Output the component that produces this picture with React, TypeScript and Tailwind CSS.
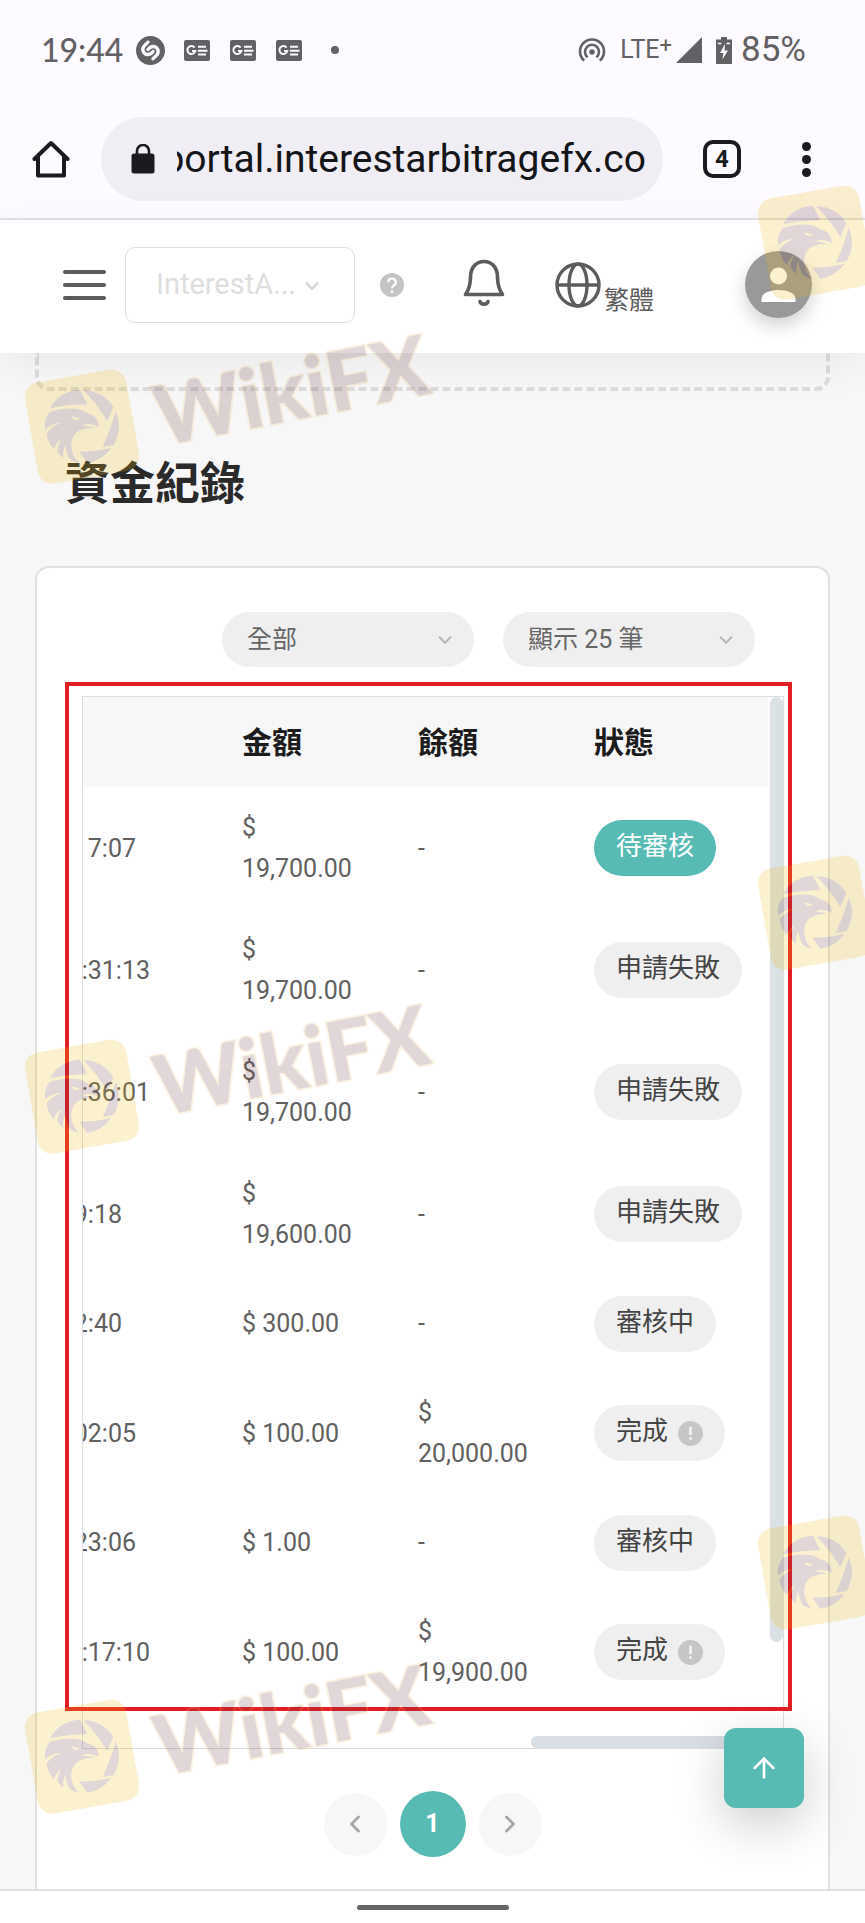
import { ArrowUp, ChevronDown, ChevronLeft, ChevronRight } from "lucide-react";
import { SiShazam } from "react-icons/si";
import clsx from "clsx";

type Row = {
  time: string;
  // right inset of the scrolled date column
  inset: string;
  amount: string;
  balance: string;
  status: string;
  kind?: "pending" | "done";
};

const rows: Row[] = [
  { time: "7:07", inset: "pr-[106px]", amount: "19,700.00", balance: "-", status: "待審核", kind: "pending" },
  { time: ":31:13", inset: "pr-[92px]", amount: "19,700.00", balance: "-", status: "申請失敗" },
  { time: ":36:01", inset: "pr-[92px]", amount: "19,700.00", balance: "-", status: "申請失敗" },
  { time: "9:18", inset: "pr-[120px]", amount: "19,600.00", balance: "-", status: "申請失敗" },
  { time: "2:40", inset: "pr-[120px]", amount: "300.00", balance: "-", status: "審核中" },
  { time: "02:05", inset: "pr-[106px]", amount: "100.00", balance: "$ 20,000.00", status: "完成", kind: "done" },
  { time: "23:06", inset: "pr-[106px]", amount: "1.00", balance: "-", status: "審核中" },
  { time: ":17:10", inset: "pr-[92px]", amount: "100.00", balance: "$ 19,900.00", status: "完成", kind: "done" },
];

function NewsIcon() {
  return (
    <svg viewBox="0 0 26 21" className="w-[26px] h-[21px]">
      <rect width="26" height="21" rx="2" fill="#636164" />
      <path d="M10.6 7.6A4 4 0 1 0 11.3 11H8" fill="none" stroke="#fdfbff" strokeWidth="2" />
      <path d="M14 6.800h8M14 10.700h9.500M14 14.600h8" stroke="#fdfbff" strokeWidth="2" />
    </svg>
  );
}

function StatusBar() {
  return (
    <div className="flex h-[100px] items-center pl-[41px] pr-[59px] text-[#636164]">
      <span className="font-['Lato',sans-serif] text-[32px] leading-10 w-[95px] font-medium">19:44</span>
      <SiShazam className="size-[29px]" />
      <div className="ml-[19px] flex gap-5">
        <NewsIcon />
        <NewsIcon />
        <NewsIcon />
      </div>
      <span className="ml-[29px] size-2 rounded-full bg-[#636164]" />
      <div className="ml-auto flex items-center">
        <svg viewBox="0 0 28 26" className="w-7 h-[26px]" fill="none" stroke="currentColor" strokeWidth="2.6">
          <circle cx="14" cy="15" r="2.8" fill="currentColor" stroke="none" />
          <path d="M6.200 23.600a12 12 0 1 1 15.600 0" />
          <path d="M9.700 20.300a7 7 0 1 1 8.600 0" />
        </svg>
        <span className="ml-[14px] text-[25px] leading-8">LTE</span>
        <span className="pb-2 text-[22px] leading-6">+</span>
        <svg viewBox="0 0 26 26" className="ml-1 size-[26px]">
          <path d="M26 0v26H0z" fill="currentColor" />
        </svg>
        <svg viewBox="0 0 16 27" className="ml-[14px] w-4 h-[27px]">
          <path d="M5 0h6v2.500h5V27H0V2.500h5z" fill="currentColor" />
          <path d="M1.800 6.500h3.500M10.500 6.500h3.500" stroke="#fdfbff" strokeWidth="1.600" />
          <path d="M9 7 4 16h3.400l-1 6.500L12 13.500H8.600z" fill="#fdfbff" />
        </svg>
        <span className="ml-[9px] text-[35px] leading-10">85%</span>
      </div>
    </div>
  );
}

function BrowserBar() {
  return (
    <div className="flex h-[120px] items-center border-b-2 border-[#e3e1e8] pl-8 pr-[54px]">
      <button aria-label="Home" className="shrink-0">
        <svg viewBox="0 0 38 38" className="size-[38px]" fill="none" stroke="#1a1b1e" strokeWidth="4" strokeLinejoin="round" strokeLinecap="round">
          <path d="M2.500 19 19 3l16.500 16M6 16.500V35.500h26V16.500" />
        </svg>
      </button>
      <div className="ml-[31px] flex h-[84px] min-w-0 flex-1 items-center rounded-full bg-[#f0eef4] pl-[30px] pr-[17px]">
        <svg viewBox="0 0 24 30" className="w-6 h-[30px] shrink-0">
          <rect x="0.500" y="9.500" width="23" height="20" rx="2.500" fill="#1a1b1e" />
          <path d="M6 10V7a6 6 0 0 1 12 0v3" fill="none" stroke="#1a1b1e" strokeWidth="2.600" />
        </svg>
        <div className="ml-[22px] flex min-w-0 flex-1 justify-end overflow-hidden">
          <span className="text-[39px] leading-[50px] whitespace-nowrap text-[#141518]">portal.interestarbitragefx.co</span>
        </div>
      </div>
      <button className="ml-10 flex size-[38px] shrink-0 items-center justify-center rounded-[10px] border-4 border-[#1a1b1e] text-[24px] leading-6 font-bold text-[#1a1b1e]">
        4
      </button>
      <button aria-label="Menu" className="ml-[61px] flex shrink-0 flex-col gap-1">
        <span className="size-[9px] rounded-full bg-[#1a1b1e]" />
        <span className="size-[9px] rounded-full bg-[#1a1b1e]" />
        <span className="size-[9px] rounded-full bg-[#1a1b1e]" />
      </button>
    </div>
  );
}

function SiteHeader() {
  return (
    <header className="relative z-10 flex h-[133px] items-center bg-white pb-1 pl-[63px] pr-[53px] text-[#5c5c5c] shadow-[0_10px_40px_rgba(0,0,0,0.06)]">
      <button aria-label="Navigation" className="flex w-[43px] flex-col gap-[9px]">
        <span className="h-1 rounded-full bg-[#5c5c5c]" />
        <span className="h-1 rounded-full bg-[#5c5c5c]" />
        <span className="h-1 rounded-full bg-[#5c5c5c]" />
      </button>
      <div className="relative ml-[19px]">
        <select
          aria-label="Account"
          className="h-[76px] w-[230px] appearance-none rounded-[10px] border border-[#dfdfdf] bg-white pl-[30px] text-[29px] text-[#dedede]"
        >
          <option>InterestA...</option>
        </select>
        <ChevronDown className="pointer-events-none absolute top-7 right-8 size-[22px] text-[#d2d2d2]" strokeWidth={2.5} />
      </div>
      <svg viewBox="0 0 24 24" className="ml-[25px] size-6">
        <circle cx="12" cy="12" r="12" fill="#c4c4c4" />
        <path d="M8.300 9.300a3.700 3.700 0 1 1 5.600 3.100c-1.300.8-1.900 1.400-1.900 2.800" fill="none" stroke="#fff" strokeWidth="2.200" />
        <circle cx="12" cy="18.800" r="1.400" fill="#fff" />
      </svg>
      <button aria-label="Notifications" className="ml-[59px] pb-1">
        <svg viewBox="0 0 42 48" className="w-[42px] h-12" fill="none" stroke="currentColor" strokeWidth="3.600" strokeLinecap="round" strokeLinejoin="round">
          <path d="M2.500 35.500h37c-3.500-5-5-10-5-17.500C34.500 8.500 29 2.500 21 2.500S7.500 8.500 7.500 18c0 7.500-1.500 12.500-5 17.500z" />
          <path d="M17 42.500c1 3.500 7 3.500 8 0" />
        </svg>
      </button>
      <button className="ml-[50px] flex items-end">
        <svg viewBox="0 0 46 46" className="size-[46px]" fill="none" stroke="currentColor" strokeWidth="3.400">
          <circle cx="23" cy="23" r="21" />
          <ellipse cx="23" cy="23" rx="9" ry="21" />
          <path d="M2 23h42" />
        </svg>
        <span className="ml-[3px] text-[25px] leading-[14px]">繁體</span>
      </button>
      <button aria-label="Profile" className="ml-auto rounded-full shadow-[0_8px_18px_rgba(0,0,0,0.18)]">
        <svg viewBox="0 0 67 67" className="size-[67px]">
          <circle cx="33.500" cy="33.500" r="33.500" fill="#999" />
          <circle cx="33.500" cy="25" r="8.500" fill="#fff" />
          <path d="M16.500 51v-3c0-12 34-12 34 0v3z" fill="#fff" />
        </svg>
      </button>
    </header>
  );
}

function FilterSelect({ label, value }: { label: string; value: string }) {
  return (
    <div className="relative">
      <select aria-label={label} className="h-[55px] w-[252px] appearance-none rounded-full bg-[#efefef] pl-[25px] text-[25px] text-[#666]">
        <option>{value}</option>
      </select>
      <ChevronDown className="pointer-events-none absolute top-[17px] right-[18px] size-[22px] text-[#b5b5b5]" />
    </div>
  );
}

function StatusBadge({ row }: { row: Row }) {
  return (
    <span
      className={clsx(
        "inline-flex h-14 items-center gap-[10px] rounded-full px-[22px] pb-1 align-middle text-[26px] leading-8 whitespace-nowrap",
        row.kind === "pending" ? "bg-[#57bbb4] text-white" : "bg-[#efefef] text-[#444]"
      )}
    >
      {row.status}
      {row.kind === "done" && (
        <svg viewBox="0 0 24 24" className="mt-1 size-[25px]">
          <circle cx="12" cy="12" r="12" fill="#c6c6c6" />
          <path d="M10.600 5.500h2.800v8h-2.800zM10.600 15.500h2.800v2.500h-2.800z" fill="#efefef" />
        </svg>
      )}
    </span>
  );
}

function RecordTable() {
  return (
    <div className="relative mt-[29px] mr-11 ml-[45px]">
      <div className="border border-[#ddd]">
        <div className="flex">
          <div className="flex-1 overflow-hidden pr-[2px]">
            <table className="w-full table-fixed text-left text-[25px] leading-[41px] text-[#606060]">
              <thead>
                <tr className="h-[90px] bg-[#f7f7f7] text-[30px] text-[#1c1c1c]">
                  <td className="w-[159px]" />
                  <th className="w-44 font-bold">金額</th>
                  <th className="w-44 font-bold">餘額</th>
                  <th className="font-bold">狀態</th>
                </tr>
              </thead>
              <tbody>
                {rows.map((row) => (
                  <tr key={row.time} className="h-[97px]">
                    <td className="overflow-hidden">
                      <div className={clsx("flex justify-end whitespace-nowrap", row.inset)}>{row.time}</div>
                    </td>
                    <td className="py-5 pr-14">$ {row.amount}</td>
                    <td className="py-5 pr-14">{row.balance}</td>
                    <td className="py-5">
                      <StatusBadge row={row} />
                    </td>
                  </tr>
                ))}
              </tbody>
            </table>
          </div>
          <div className="w-[13px]">
            <div className="h-[945px] rounded-full bg-[#d9e1e4]" />
          </div>
        </div>
        <div className="mt-[23px] flex justify-end pr-4">
          <div className="h-3 w-[236px] rounded-full bg-[#d9dde4]" />
        </div>
      </div>
      {/* highlighted region */}
      <div className="pointer-events-none absolute -top-[14px] -right-2 bottom-[38px] -left-[17px] border-4 border-[#e31e25]" />
    </div>
  );
}

function Pagination() {
  return (
    <nav className="mt-[42px] flex items-center justify-center gap-[13px] pb-8">
      <button aria-label="Previous" className="flex size-[63px] items-center justify-center rounded-full bg-[#f7f7f7] text-[#a8a8a8]">
        <ChevronLeft className="size-7" strokeWidth={2.5} />
      </button>
      <button className="size-[66px] rounded-full bg-[#57bbb4] text-[25px] font-bold text-white">1</button>
      <button aria-label="Next" className="flex size-[63px] items-center justify-center rounded-full bg-[#f7f7f7] text-[#a8a8a8]">
        <ChevronRight className="size-7" strokeWidth={2.5} />
      </button>
    </nav>
  );
}

function Watermark({ className }: { className: string }) {
  return (
    <svg viewBox="69 351 1230 471" className={clsx("absolute h-[157px] w-[410px] overflow-visible opacity-20", className)}>
      <rect x="92" y="481" width="308" height="308" rx="44" fill="#efbc14" transform="rotate(-10 246 635)" />
      <g fill="#6c3c40">
        <path d="M150 580C168 546 200 526 240 524L262 568C222 568 186 572 150 580Z" />
        <path d="M250 526C286 526 320 544 340 576L322 618C300 582 276 552 250 526Z" />
        <path d="M347 590C362 622 360 656 341 690L308 696C322 666 336 628 347 590Z" />
        <path d="M334 698C316 724 292 738 262 743L238 710C272 710 304 706 334 698Z" />
        <path d="M149 591C180 582 206 578 236 583C250 586 256 592 264 596C282 598 296 612 296 636C286 628 272 626 258 627L244 632C256 632 272 632 284 640C264 636 244 642 230 652C216 664 210 684 216 708C220 724 228 734 236 744C222 740 214 736 208 730C204 722 198 706 196 690C190 702 188 716 190 728C182 722 176 716 172 708C172 696 178 684 184 672C172 680 166 690 162 702C148 688 142 672 140 656C150 640 166 630 184 624C164 624 146 632 136 644C132 624 138 604 149 591Z" />
      </g>
      <path d="M212 604L238 610C236 618 222 618 212 604Z" fill="#efbc14" />
      <text
        transform="translate(482 693) rotate(-11)"
        className="font-['Lato',sans-serif] text-[248px] font-black"
        fill="#6c3c40"
        stroke="#f0c070"
        strokeWidth="10"
        strokeLinejoin="round"
        paintOrder="stroke"
      >
        WikiFX
      </text>
    </svg>
  );
}

export default function App() {
  return (
    <div className="relative flex min-h-screen flex-col overflow-hidden bg-[#fdfbff] font-['Roboto','Noto_Sans_CJK_TC',sans-serif]">
      <StatusBar />
      <BrowserBar />
      <SiteHeader />
      <main className="flex flex-1 flex-col bg-[#f7f7f7] px-[35px]">
        <div className="h-[38px] rounded-b-[14px] border-4 border-t-0 border-dashed border-[#dcdcdc]" />
        <h2 className="mt-[62px] mb-[49px] pl-[30px] text-[45px] leading-[64px] font-bold text-[#2a2a2a]">資金紀錄</h2>
        <section className="flex-1 rounded-t-[14px] border-2 border-b-0 border-[#e0e0e0] bg-white pt-11">
          <div className="flex justify-end gap-[29px] pr-[73px]">
            <FilterSelect label="類型" value="全部" />
            <FilterSelect label="筆數" value="顯示 25 筆" />
          </div>
          <RecordTable />
          <Pagination />
        </section>
      </main>
      <footer className="flex h-[34px] justify-center border-t-2 border-[#e0e0e0] bg-white pt-[14px]">
        <span className="h-[5px] w-[152px] rounded-full bg-[#666]" />
      </footer>

      <a
        href="#top"
        aria-label="Back to top"
        className="absolute right-[61px] bottom-[115px] flex size-20 items-center justify-center rounded-xl bg-[#57bbb4] text-white shadow-[0_16px_50px_rgba(0,0,0,0.2)]"
      >
        <ArrowUp className="size-8" />
      </a>

      {/* watermark layer */}
      <div className="pointer-events-none absolute inset-0 z-20 overflow-hidden">
        <Watermark className="top-[332px] left-[23px]" />
        <Watermark className="top-[1002px] left-[23px]" />
        <Watermark className="top-[1662px] left-[23px]" />
        <Watermark className="top-[148px] left-[756px]" />
        <Watermark className="top-[818px] left-[756px]" />
        <Watermark className="top-[1478px] left-[756px]" />
      </div>
    </div>
  );
}
